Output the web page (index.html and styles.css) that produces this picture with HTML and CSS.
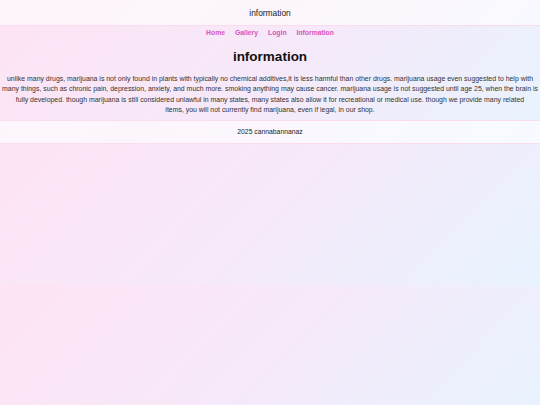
FILE: index.html
```html
<!DOCTYPE html>
<html lang="en">
<head>
<meta charset="utf-8">
<title>information</title>
<link rel="stylesheet" href="styles.css">
</head>
<body>
<header class="site-header">
  <div class="site-title">information</div>
</header>
<nav class="site-nav">
  <a href="#">Home</a>
  <a href="#">Gallery</a>
  <a href="#">Login</a>
  <a href="#">Information</a>
</nav>
<main class="content">
  <h1 class="page-title">information</h1>
  <p class="info-text">unlike many drugs, marijuana is not only found in plants with typically no chemical additives,it is less harmful than other drugs. marijuana usage even suggested to help with<br>many things, such as chronic pain, depression, anxiety, and much more. smoking anything may cause cancer. marijuana usage is not suggested until age 25, when the brain is<br>fully developed. though marijuana is still considered unlawful in many states, many states also allow it for recreational or medical use. though we provide many related<br>items, you will not currently find marijuana, even if legal, in our shop.</p>
</main>
<footer class="site-footer">2025 cannabannanaz</footer>
</body>
</html>
```

FILE: styles.css
```css
html {
  background-image: linear-gradient(135deg, #fde3f4 0%, #f6e9f9 50%, #e7f3fe 100%);
  background-size: 100% 142.5px;
  background-repeat: repeat;
  background-position: 0 0;
}

body {
  margin: 0;
  font-family: "Comic Sans MS", "Liberation Sans", sans-serif;
  color: #222;
}

.site-header {
  background: rgba(255, 255, 255, 0.62);
  border-bottom: 1px solid #fbdcef;
  padding: 8px 0 7px;
  text-align: center;
}

.site-title {
  font-size: 8.4px;
  line-height: 10px;
  color: #222;
}

.site-nav {
  display: flex;
  justify-content: center;
  gap: 10px;
  padding: 1px 0 0;
  line-height: 11px;
}

.site-nav a {
  font-size: 6.8px;
  font-weight: bold;
  color: #d454c0;
  text-decoration: none;
}

.content {
  text-align: center;
}

.page-title {
  margin: 10px 0 0;
  font-size: 13.5px;
  line-height: 18px;
  font-weight: bold;
  color: #111;
}

.info-text {
  margin: 8px 0 0;
  font-size: 6.93px;
  line-height: 10.3px;
  color: #333;
  white-space: nowrap;
}

.site-footer {
  margin-top: 5px;
  background: rgba(255, 255, 255, 0.62);
  border-top: 1px solid #fbdcef;
  border-bottom: 1px solid #fbdcef;
  padding: 6px 0;
  font-size: 6.8px;
  line-height: 10px;
  text-align: center;
  color: #222;
}
```
